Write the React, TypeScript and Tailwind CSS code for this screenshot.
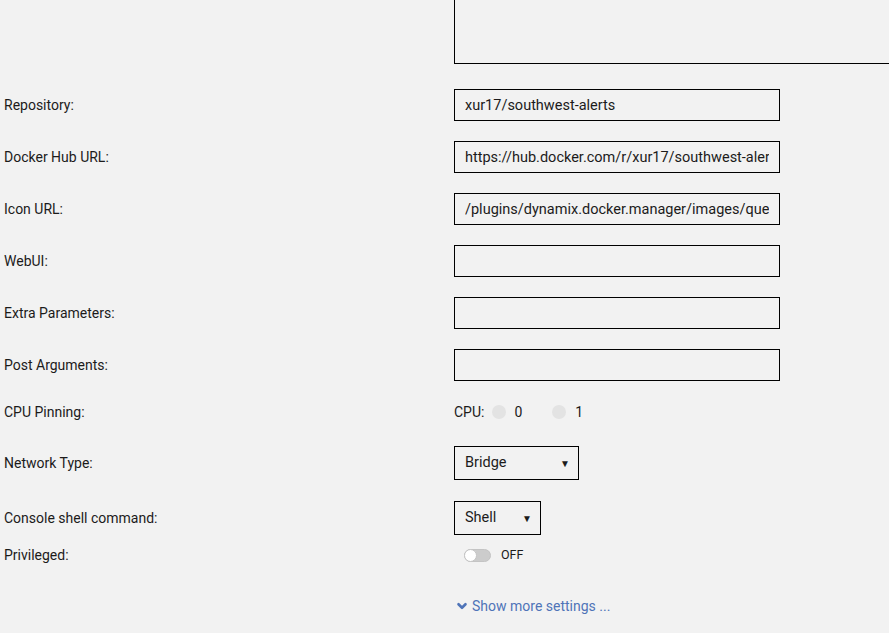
import { ChevronDown } from 'lucide-react';

const fields = [
  { label: 'Repository:', value: 'xur17/southwest-alerts' },
  { label: 'Docker Hub URL:', value: 'https://hub.docker.com/r/xur17/southwest-alerts/' },
  { label: 'Icon URL:', value: '/plugins/dynamix.docker.manager/images/question.png' },
  { label: 'WebUI:', value: '' },
  { label: 'Extra Parameters:', value: '' },
  { label: 'Post Arguments:', value: '' },
];

function Label({ children }: { children: React.ReactNode }) {
  return <div className="w-[454px] shrink-0 pl-[4px] text-[14px] text-[#1c1b1b]">{children}</div>;
}

function Select({ value, width }: { value: string; width: string }) {
  return (
    <div
      className={`flex h-[34px] items-center justify-between border border-black pl-[10px] pr-[8px] text-[14.5px] text-[#1c1b1b] ${width}`}
    >
      <span>{value}</span>
      <span className="text-[10px]">▼</span>
    </div>
  );
}

export default function App() {
  return (
    <div
      className="h-[633px] w-[889px] overflow-hidden bg-[#f2f2f2]"
      style={{ fontFamily: 'Roboto, "Open Sans", sans-serif' }}
    >
      {/* description textarea, scrolled mostly out of view */}
      <div className="flex">
        <div className="w-[454px] shrink-0" />
        <div className="h-[64px] w-[460px] shrink-0 border border-t-0 border-black" />
      </div>

      <div className="mt-[25px] flex flex-col gap-[20px]">
        {fields.map((f) => (
          <div key={f.label} className="flex items-center">
            <Label>{f.label}</Label>
            <input
              readOnly
              value={f.value}
              className="h-[32px] w-[326px] border border-black bg-transparent px-[10px] text-[14.5px] text-[#1c1b1b] outline-none"
            />
          </div>
        ))}
      </div>

      <div className="mt-[21px] flex h-[20px] items-center">
        <Label>CPU Pinning:</Label>
        <div className="flex items-center text-[14px] text-[#1c1b1b]">
          <span>CPU:</span>
          <span className="ml-[8px] h-[14px] w-[14px] rounded-full bg-[#e3e3e3]" />
          <span className="ml-[8px]">0</span>
          <span className="ml-[30px] h-[14px] w-[14px] rounded-full bg-[#e3e3e3]" />
          <span className="ml-[9px]">1</span>
        </div>
      </div>

      <div className="mt-[24px] flex items-center">
        <Label>Network Type:</Label>
        <Select value="Bridge" width="w-[125px]" />
      </div>

      <div className="mt-[21px] flex items-center">
        <Label>Console shell command:</Label>
        <Select value="Shell" width="w-[87px]" />
      </div>

      <div className="mt-[10px] flex h-[20px] items-center">
        <Label>Privileged:</Label>
        <div className="ml-[10px] flex items-center">
          <div className="relative h-[13px] w-[27px] rounded-full border border-[#c4c4c4] bg-[#cccccc]">
            <div className="absolute left-[-1px] top-[-1px] h-[13px] w-[13px] rounded-full border border-[#c4c4c4] bg-white" />
          </div>
          <span className="ml-[10px] text-[12.5px] text-[#1c1b1b]">OFF</span>
        </div>
      </div>

      <div className="mt-[32px] flex h-[18px] items-center">
        <div className="w-[455px] shrink-0" />
        <div className="flex items-center gap-[3px] text-[14px] text-[#4f74b8]">
          <ChevronDown className="h-[14px] w-[14px]" strokeWidth={4.5} />
          <span>Show more settings ...</span>
        </div>
      </div>
    </div>
  );
}
